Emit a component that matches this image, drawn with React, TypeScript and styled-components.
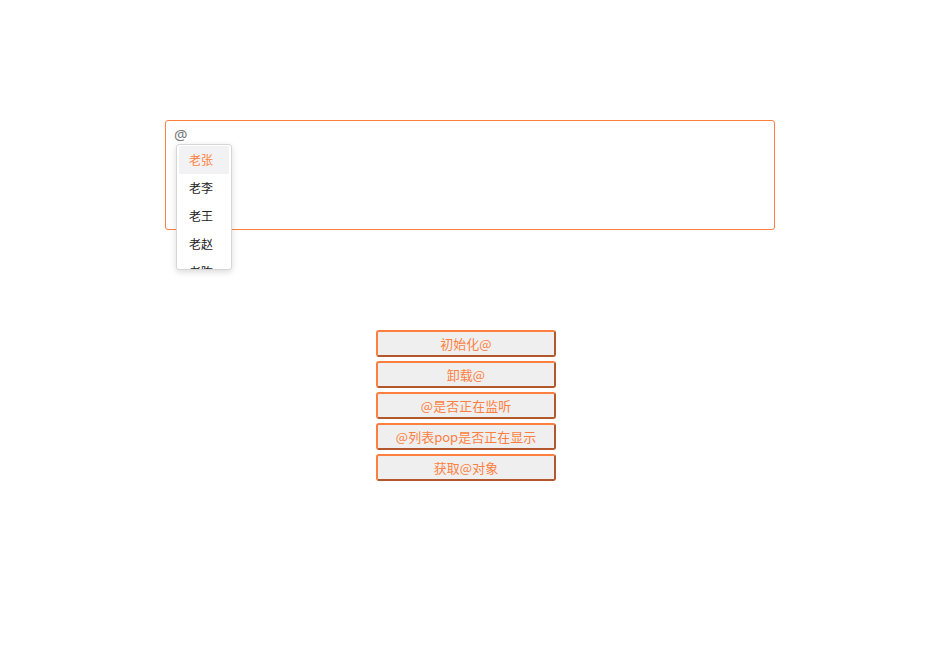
import React from "react";
import styled, { createGlobalStyle } from "styled-components";

const Global = createGlobalStyle`
  html, body { margin: 0; padding: 0; background: #fff; }
  body { font-family: "Noto Sans CJK SC", "Noto Sans", sans-serif; }
`;

const Page = styled.div`
  width: 940px;
  height: 660px;
  display: flex;
  flex-direction: column;
  padding: 120px 0 0 165px;
  box-sizing: border-box;
`;

const EditorWrap = styled.div`
  position: relative;
  width: 610px;
  height: 110px;
`;

const Editor = styled.div`
  box-sizing: border-box;
  width: 100%;
  height: 100%;
  border: 1px solid #ff7f3f;
  border-radius: 3px;
  padding: 3px 8px 2px;
  font-family: "Noto Sans", sans-serif;
  font-size: 15px;
  line-height: 20px;
  color: #777;
`;

const Pop = styled.ul`
  position: absolute;
  left: 11px;
  top: 24px;
  width: 56px;
  height: 126px;
  box-sizing: border-box;
  margin: 0;
  padding: 1px 2px;
  list-style: none;
  background: #fff;
  border: 1px solid #d6d6d6;
  border-radius: 3px;
  box-shadow: 0 2px 6px rgba(0, 0, 0, 0.15);
  overflow: hidden;
`;

const PopItem = styled.li<{ $active?: boolean }>`
  height: 28px;
  line-height: 28px;
  padding-left: 10px;
  font-size: 12px;
  color: ${(p) => (p.$active ? "#ff7f3f" : "#222")};
  background: ${(p) => (p.$active ? "#f2f2f4" : "transparent")};
`;

const Buttons = styled.div`
  display: flex;
  flex-direction: column;
  gap: 4px;
  margin: 100px 0 0 211px;
`;

const Btn = styled.button`
  width: 180px;
  height: 27px;
  box-sizing: border-box;
  padding: 0;
  background: #efefef;
  border-style: solid;
  border-width: 2px;
  border-color: #ff7f3f #b3582c #b3582c #ff7f3f;
  border-radius: 3px;
  color: #ff7f3f;
  font-family: "Noto Sans CJK SC", "Noto Sans", sans-serif;
  font-size: 13px;
  line-height: 20px;
`;

const names = ["老张", "老李", "老王", "老赵", "老陈"];
const actions = ["初始化@", "卸载@", "@是否正在监听", "@列表pop是否正在显示", "获取@对象"];

export default function App() {
  return (
    <>
      <Global />
      <Page>
        <EditorWrap>
          <Editor>@</Editor>
          <Pop>
            {names.map((n, i) => (
              <PopItem key={n} $active={i === 0}>
                {n}
              </PopItem>
            ))}
          </Pop>
        </EditorWrap>
        <Buttons>
          {actions.map((a) => (
            <Btn key={a}>{a}</Btn>
          ))}
        </Buttons>
      </Page>
    </>
  );
}
